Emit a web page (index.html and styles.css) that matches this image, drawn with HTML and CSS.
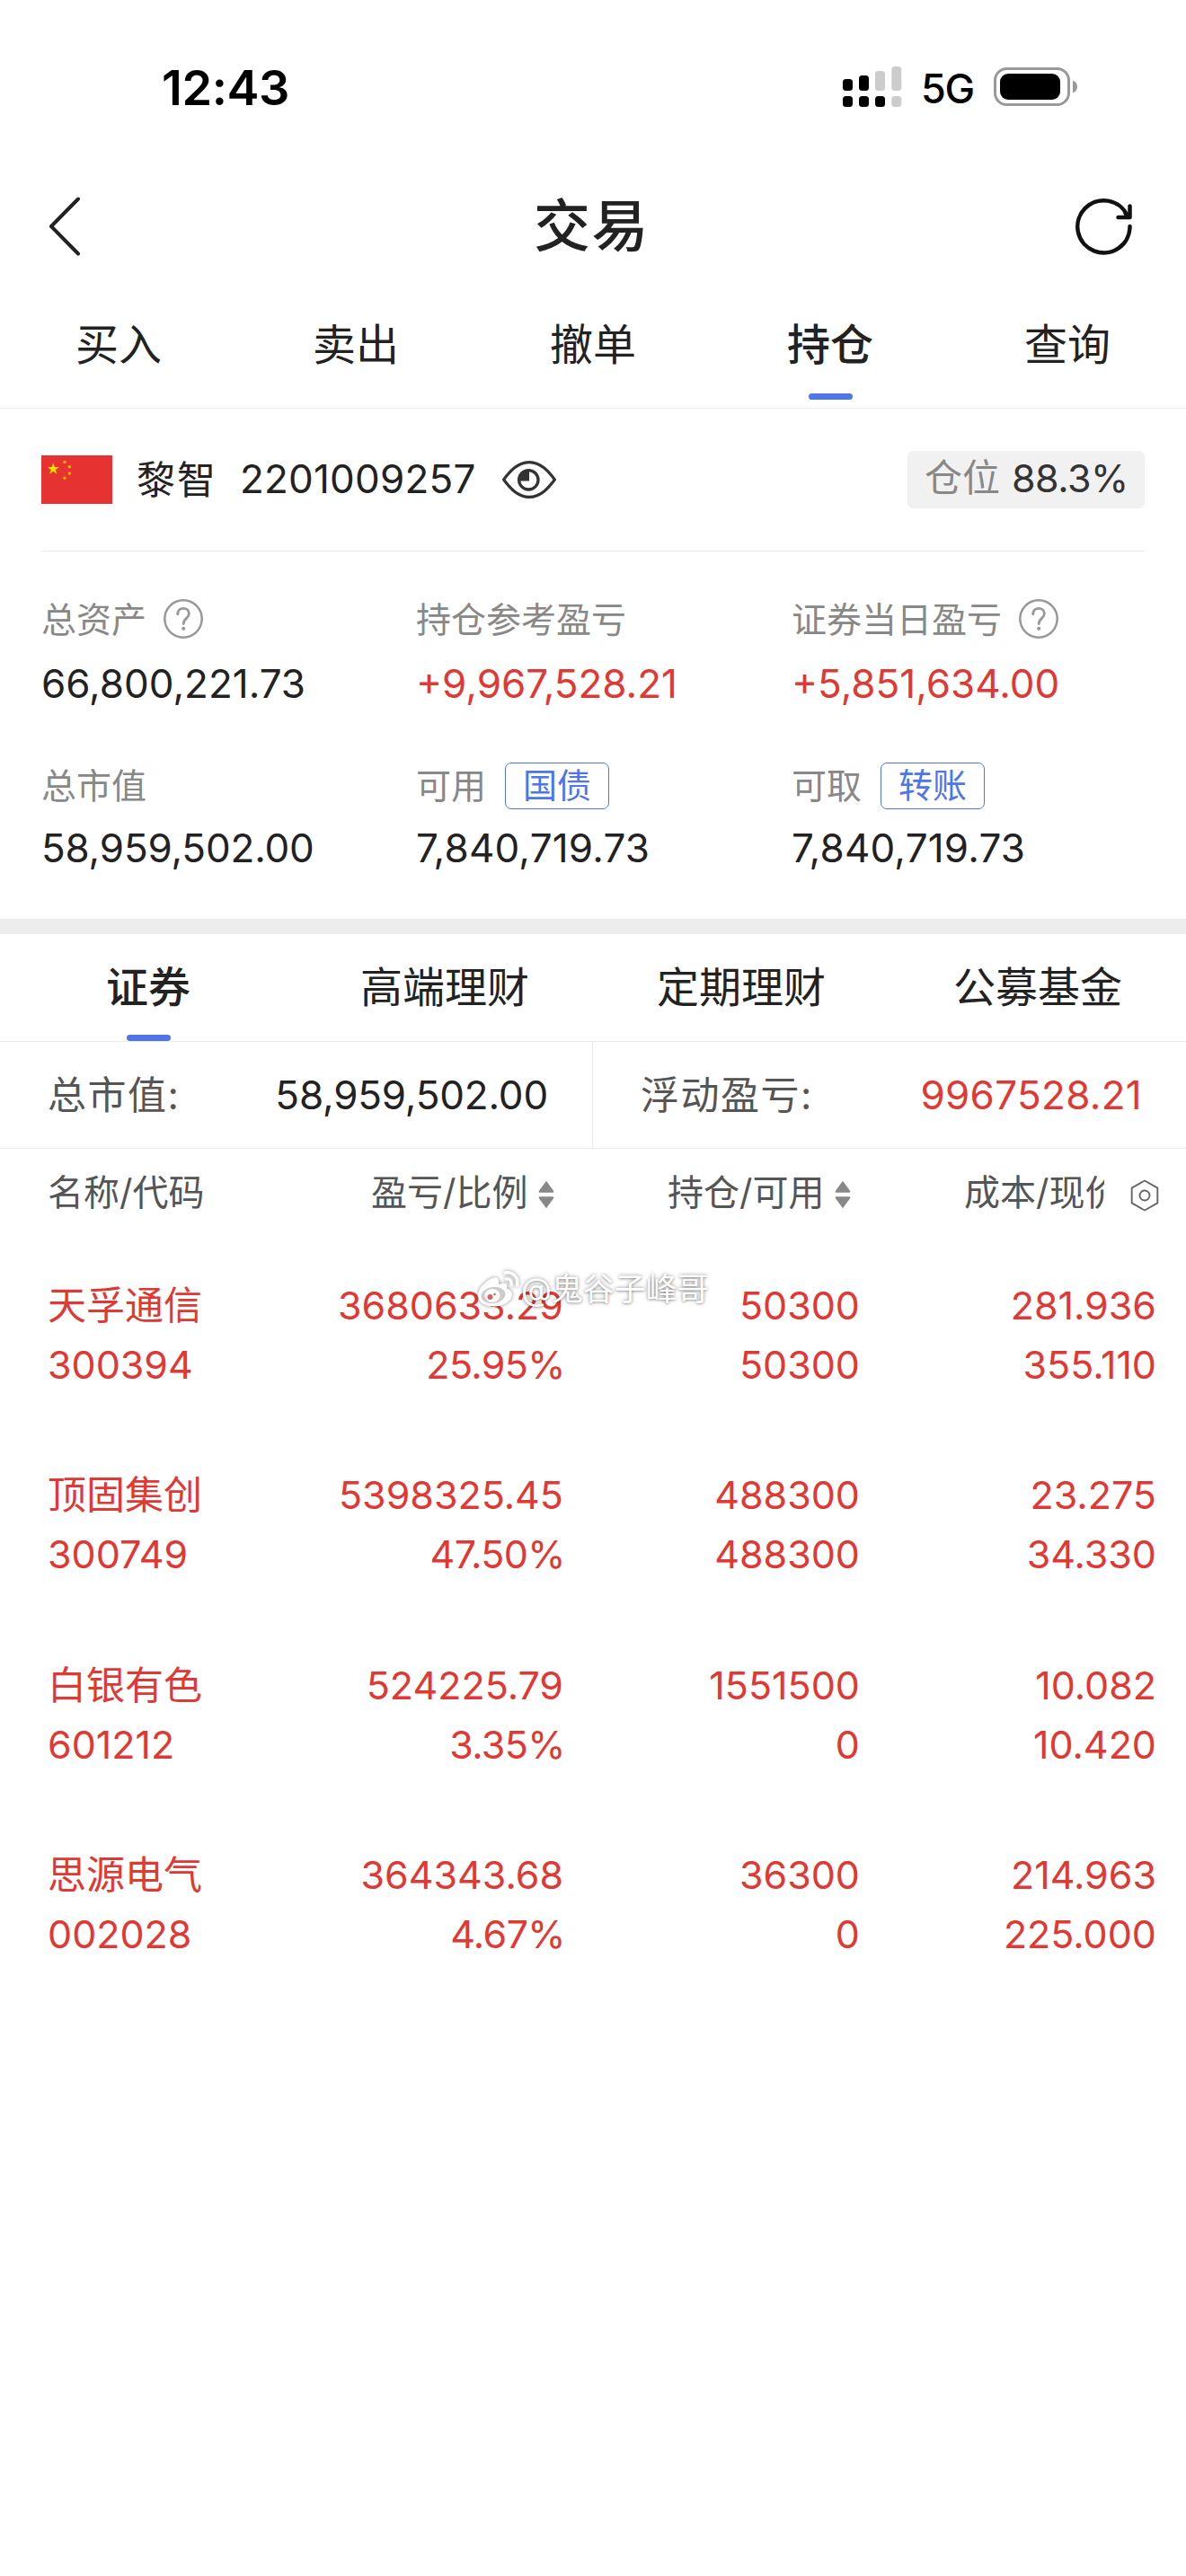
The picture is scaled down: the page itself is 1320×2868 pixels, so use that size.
FILE: index.html
```
<!DOCTYPE html>
<html lang="zh-CN">
<head>
<meta charset="utf-8">
<title>交易</title>
<link rel="stylesheet" href="styles.css">
</head>
<body>
<svg class="defs" width="0" height="0" aria-hidden="true">
  <symbol id="help" viewBox="0 0 46 46">
    <circle cx="23" cy="23" r="20.7" fill="none" stroke="#999" stroke-width="2.5"/>
    <path d="M16.8 17.8c0-3.9 2.7-6.4 6.3-6.4s6.3 2.4 6.3 5.9c0 5-6.2 5.3-6.2 11.2" fill="none" stroke="#999" stroke-width="2.9" stroke-linecap="round"/>
    <circle cx="23.2" cy="33.8" r="2.1" fill="#999"/>
  </symbol>
  <symbol id="sort" viewBox="0 0 18 32">
    <path d="M9 .8 17.2 12q.8 1.8-1 1.8H1.8Q0 13.8.8 12Z" fill="#888"/>
    <path d="M9 31.2 17.2 20q.8-1.8-1-1.8H1.8Q0 18.2.8 20Z" fill="#888"/>
  </symbol>
</svg>

<div class="status">
  <span class="time">12:43</span>
  <div class="status-right">
    <svg class="signal" viewBox="0 0 66 45">
      <g fill="#000">
        <rect x="0" y="14" width="11" height="13" rx="3.5"/>
        <rect x="18" y="10" width="11" height="17" rx="3.5"/>
        <rect x="0" y="33" width="11" height="12" rx="3.5"/>
        <rect x="18" y="33" width="11" height="12" rx="3.5"/>
        <rect x="36" y="33" width="11" height="12" rx="3.5"/>
      </g>
      <g fill="#ccc">
        <rect x="36" y="5" width="11" height="22" rx="3.5"/>
        <rect x="54.3" y="0" width="11" height="27" rx="3.5"/>
        <rect x="54.3" y="33" width="11" height="12" rx="3.5"/>
      </g>
    </svg>
    <span class="net">5G</span>
    <svg class="battery" viewBox="0 0 94 43">
      <rect x="1.5" y="1.5" width="82" height="40" rx="13" fill="none" stroke="#999" stroke-width="3"/>
      <rect x="7" y="7" width="67" height="29" rx="9" fill="#000"/>
      <path d="M88 14.500q5 2 5 7t-5 7z" fill="#999"/>
    </svg>
  </div>
</div>

<div class="nav">
  <svg class="back" viewBox="0 0 36 72"><path d="M33 7.500 3 38l30 30.500" fill="none" stroke="#222" stroke-width="4" stroke-linecap="round" stroke-linejoin="round"/></svg>
  <h1 class="title">交易</h1>
  <svg class="refresh" viewBox="0 0 68 72"><g fill="none" stroke="#111" stroke-width="4.5" stroke-linecap="round" stroke-linejoin="round"><path d="M62.500 38A29.100 29.100 0 1 1 60 26.500"/><path d="M49.500 28H62.500V15.500M57.500 23.500l3.500 3.500"/></g></svg>
</div>

<div class="tabs">
  <div class="tab">买入</div>
  <div class="tab">卖出</div>
  <div class="tab">撤单</div>
  <div class="tab active">持仓</div>
  <div class="tab">查询</div>
</div>

<div class="account">
  <svg class="flag" viewBox="0 0 79 54">
    <rect width="79" height="54" fill="#e63231"/>
    <path d="M13.300 8.300 14.900 13H19.800L15.900 15.900 17.300 20.700 13.300 17.800 9.300 20.700 10.700 15.900 6.800 13H11.700Z" fill="#fd0"/>
    <g fill="#f8b500"><circle cx="26" cy="7.400" r="1.700"/><circle cx="31.300" cy="12.700" r="1.700"/><circle cx="31.300" cy="20" r="1.700"/><circle cx="26" cy="25.300" r="1.700"/></g>
  </svg>
  <span class="name">黎智</span>
  <span class="acct-no">2201009257</span>
  <svg class="eye" viewBox="0 0 60 44">
    <path d="M1.600 22C8 13.500 17 2.600 30 2.600S52 13.500 58.400 22C52 30.500 43 41.400 30 41.400S8 30.500 1.600 22Z" fill="none" stroke="#333" stroke-width="3.200" stroke-linejoin="round"/>
    <circle cx="29.300" cy="22.300" r="10.700" fill="none" stroke="#333" stroke-width="3.300"/>
    <path d="M30 23.500V11.500A11 11 0 0 0 18.500 23.500Z" fill="#333"/>
  </svg>
  <div class="position"><span class="position-label">仓位</span><span class="position-value">88.3%</span></div>
</div>

<div class="stats">
  <div class="stat"><div class="label">总资产<svg class="help"><use href="#help"/></svg></div><div class="value">66,800,221.73</div></div>
  <div class="stat"><div class="label">持仓参考盈亏</div><div class="value red">+9,967,528.21</div></div>
  <div class="stat"><div class="label">证券当日盈亏<svg class="help"><use href="#help"/></svg></div><div class="value red">+5,851,634.00</div></div>
  <div class="stat second"><div class="label">总市值</div><div class="value tight">58,959,502.00</div></div>
  <div class="stat second"><div class="label">可用<span class="pill">国债</span></div><div class="value wide">7,840,719.73</div></div>
  <div class="stat second"><div class="label">可取<span class="pill">转账</span></div><div class="value wide">7,840,719.73</div></div>
</div>

<div class="band"></div>

<div class="subtabs">
  <div class="subtab active">证券</div>
  <div class="subtab">高端理财</div>
  <div class="subtab">定期理财</div>
  <div class="subtab">公募基金</div>
</div>

<div class="summary">
  <div class="sum"><span class="sum-label">总市值:</span><span class="sum-value tight">58,959,502.00</span></div>
  <div class="sum"><span class="sum-label">浮动盈亏:</span><span class="sum-value wide red">9967528.21</span></div>
</div>

<div class="holdings">
  <div class="row head">
    <div class="th">名称/代码</div>
    <div class="th num">盈亏/比例<svg class="sort"><use href="#sort"/></svg></div>
    <div class="th num">持仓/可用<svg class="sort"><use href="#sort"/></svg></div>
    <div class="th last"><span class="clip">成本/现价</span><svg class="hex" viewBox="0 0 32 36"><path d="M16 1.500 30.300 9.600V26.400L16 34.500 1.700 26.400V9.600Z" fill="none" stroke="#666" stroke-width="1.900"/><circle cx="16" cy="18" r="5.500" fill="none" stroke="#666" stroke-width="1.900"/></svg></div>
  </div>
  <div class="row"><div>天孚通信<br>300394</div><div class="num">3680633.29<br><span class="pct">25.95%</span></div><div class="num">50300<br>50300</div><div class="num">281.936<br>355.110</div></div>
  <div class="row"><div>顶固集创<br>300749</div><div class="num">5398325.45<br><span class="pct">47.50%</span></div><div class="num">488300<br>488300</div><div class="num">23.275<br>34.330</div></div>
  <div class="row"><div>白银有色<br>601212</div><div class="num">524225.79<br><span class="pct">3.35%</span></div><div class="num">1551500<br>0</div><div class="num">10.082<br>10.420</div></div>
  <div class="row"><div>思源电气<br>002028</div><div class="num">364343.68<br><span class="pct">4.67%</span></div><div class="num">36300<br>0</div><div class="num">214.963<br>225.000</div></div>
</div>

<div class="watermark">
  <svg class="weibo" viewBox="0 0 48 42">
    <path d="M17 9C10 12 1 20 1 28c0 8 8 12.500 17.500 12.500C30 40.500 39 34 39 27.500c0-4-3-6-6-7 .8-3 .5-8-9-4.500C25 9 22 7 17 9Z" fill="#fff"/>
    <ellipse cx="18" cy="28" rx="13.500" ry="9" fill="#bbb" fill-opacity=".75" transform="rotate(-8 18 28)"/>
    <ellipse cx="17" cy="28.500" rx="8.500" ry="7.500" fill="#fff" fill-opacity=".9"/>
    <circle cx="14.500" cy="30" r="3" fill="#c66"/>
    <circle cx="19.500" cy="27" r="1.300" fill="#c66"/>
    <path d="M32 10c4-.8 7 2 6 7M31 3c9-1.500 15.500 5 13.500 14" fill="none" stroke="#fff" stroke-width="3.300" stroke-linecap="round"/>
  </svg>
  <span>@鬼谷子峰哥</span>
</div>
</body>
</html>
```
FILE: styles.css
```
* { box-sizing: border-box; }

body {
  margin: 0;
  width: 1320px;
  min-height: 2868px;
  position: relative;
  background: #fff;
  color: #222;
  font-family: Inter, "Noto Sans CJK SC", sans-serif;
  font-size: 44px;
}

svg { display: block; flex: none; }
.defs { position: absolute; }
.red { color: #e03834; }

/* Status bar */
.status {
  height: 196px;
  padding: 0 127px 0 180px;
  display: flex;
  align-items: center;
  justify-content: space-between;
  color: #000;
}
.time { font-size: 54px; font-weight: 600; letter-spacing: -.4px; line-height: 60px; }
.status-right { display: flex; align-items: center; }
.signal { width: 66px; height: 45px; margin-top: -3px; }
.net { font-size: 45px; font-weight: 500; letter-spacing: -1.2px; line-height: 50px; margin: 2px 22px 0 21px; }
.battery { width: 94px; height: 43px; margin: -3px -7px 0 0; }

/* Navigation bar */
.nav {
  height: 108px;
  padding: 0 57px 0 54px;
  display: grid;
  grid-template-columns: 1fr auto 1fr;
  align-items: center;
}
.back { width: 36px; height: 72px; }
.refresh { width: 68px; height: 72px; justify-self: end; }
.title { margin: 2px 0 0; font-size: 63px; font-weight: 500; letter-spacing: 1.5px; line-height: 80px; }

/* Main tabs */
.tabs {
  height: 151px;
  padding-top: 50px;
  display: grid;
  grid-template-columns: repeat(5, 1fr);
  border-bottom: 1px solid #ebebeb;
}
.tab { font-size: 48px; line-height: 60px; text-align: center; }
.tab.active { font-weight: 500; }
.tab.active::after,
.subtab.active::after {
  content: "";
  display: block;
  width: 49px;
  height: 7px;
  margin: 24px auto 0;
  border-radius: 3.5px;
  background: #5075e8;
}

/* Account */
.account {
  height: 159px;
  margin: 0 46px;
  display: flex;
  align-items: center;
  border-bottom: 1px solid #ebebeb;
}
.flag { width: 79px; height: 54px; margin-right: 27px; }
.name { font-size: 43px; letter-spacing: 2px; margin: -1px 25px 0 0; line-height: 60px; }
.acct-no { letter-spacing: .2px; margin: -2px 29px 0 0; line-height: 60px; }
.eye { width: 60px; height: 44px; margin-top: -1px; }
.position {
  width: 264px;
  height: 64px;
  margin-left: auto;
  padding: 0 0 4px 19px;
  display: flex;
  align-items: center;
  border-radius: 6px;
  background: #f1f1f1;
  line-height: 60px;
}
.position-label { font-size: 42px; color: #888; margin-right: 13px; }
.position-value { font-size: 43px; letter-spacing: -.5px; color: #333; }

/* Asset figures */
.stats {
  height: 409px;
  padding: 56px 0 0 46px;
  display: grid;
  grid-template-columns: 417px 418px 1fr;
  grid-template-rows: 113px 116px;
  row-gap: 67px;
}
.label { display: flex; align-items: center; height: 40px; font-size: 39px; color: #888; line-height: 40px; }
.value { margin-top: 29px; line-height: 44px; }
.tight { letter-spacing: -.18px; }
.wide { letter-spacing: .2px; }
.second .label { height: 50px; }
.second .value { margin-top: 22px; }
.help { width: 46px; height: 46px; margin: -3px 0 0 18px; }
.pill {
  width: 116px;
  height: 52px;
  margin-left: 21px;
  border: 1.5px solid #4f75ec;
  border-radius: 7px;
  color: #4f75ec;
  font-size: 38px;
  line-height: 48px;
  text-align: center;
}

.band { height: 17px; background: #ededed; }

/* Product tabs */
.subtabs {
  height: 120px;
  padding-top: 29px;
  display: grid;
  grid-template-columns: repeat(4, 1fr);
  border-bottom: 1px solid #ebebeb;
}
.subtab { font-size: 47px; line-height: 60px; text-align: center; }
.subtab.active { font-weight: 500; }
.subtab.active::after { margin-top: 23px; }

/* Totals */
.summary { height: 119px; display: grid; grid-template-columns: 1fr 1fr; border-bottom: 1px solid #ebebeb; }
.sum { display: flex; align-items: center; justify-content: space-between; padding: 0 49px 0 53px; line-height: 60px; }
.sum:first-child { border-right: 1px solid #ebebeb; }
.sum-label { font-size: 43px; letter-spacing: 1.5px; color: #555; }
.sum-value.wide { letter-spacing: .3px; }

/* Holdings */
.row {
  height: 211.33px;
  padding: 43px 0 0 53px;
  display: grid;
  grid-template-columns: 243px 331px 330px 1fr;
  font-size: 43px;
  line-height: 66px;
  color: #e03834;
}
.row .num { text-align: right; }
.row .num:last-child { padding-right: 33px; }
.pct { letter-spacing: -.6px; margin-right: -2px; }
.row.head { height: 98px; padding-top: 0; color: #555; font-size: 40px; align-items: center; }
.th { display: flex; align-items: center; white-space: nowrap; }
.row .th.num { justify-content: flex-end; padding-right: 10px; }
.sort { width: 18px; height: 32px; margin: 4px 0 0 11.5px; }
.th.last { padding-left: 116px; }
.clip { width: 156px; overflow: hidden; }
.hex { width: 32px; height: 36px; margin: 6px 0 0 29px; }

/* Author mark laid over the list */
.watermark {
  position: absolute;
  left: 531px;
  top: 1413px;
  display: flex;
  align-items: center;
  gap: 1px;
  color: #fff;
  font-size: 35px;
  line-height: 44px;
  text-shadow: 0 0 4px rgba(0, 0, 0, .45), 0 1px 2px rgba(0, 0, 0, .2);
}
.weibo { width: 48px; height: 42px; overflow: visible; filter: drop-shadow(0 0 2px rgba(0, 0, 0, .45)); }
```
